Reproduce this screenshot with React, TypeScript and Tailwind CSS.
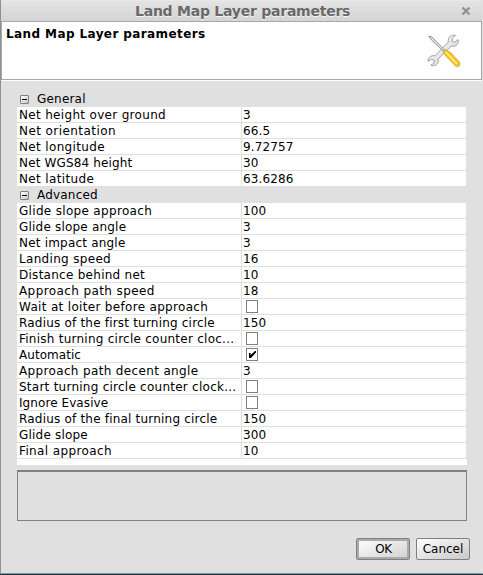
type Row = { label: string; value: string | boolean; tracking: string };

const general: Row[] = [
  { label: 'Net height over ground', value: '3', tracking: 'tracking-[0.32px]' },
  { label: 'Net orientation', value: '66.5', tracking: 'tracking-[0.43px]' },
  { label: 'Net longitude', value: '9.72757', tracking: 'tracking-[0.35px]' },
  { label: 'Net WGS84 height', value: '30', tracking: 'tracking-[0.15px]' },
  { label: 'Net latitude', value: '63.6286', tracking: 'tracking-[0.35px]' },
];

const advanced: Row[] = [
  { label: 'Glide slope approach', value: '100', tracking: 'tracking-[0.32px]' },
  { label: 'Glide slope angle', value: '3', tracking: 'tracking-[0.2px]' },
  { label: 'Net impact angle', value: '3', tracking: 'tracking-[0.2px]' },
  { label: 'Landing speed', value: '16', tracking: 'tracking-[0.32px]' },
  { label: 'Distance behind net', value: '10', tracking: 'tracking-[0.27px]' },
  { label: 'Approach path speed', value: '18', tracking: 'tracking-[0.4px]' },
  { label: 'Wait at loiter before approach', value: false, tracking: 'tracking-[0.32px]' },
  { label: 'Radius of the first turning circle', value: '150', tracking: 'tracking-[0.2px]' },
  { label: 'Finish turning circle counter cloc...', value: false, tracking: 'tracking-[0.25px]' },
  { label: 'Automatic', value: true, tracking: 'tracking-[0.05px]' },
  { label: 'Approach path decent angle', value: '3', tracking: 'tracking-[0.35px]' },
  { label: 'Start turning circle counter clock...', value: false, tracking: 'tracking-[0.25px]' },
  { label: 'Ignore Evasive', value: false, tracking: 'tracking-[0.08px]' },
  { label: 'Radius of the final turning circle', value: '150', tracking: 'tracking-[0.2px]' },
  { label: 'Glide slope', value: '300', tracking: 'tracking-[0.2px]' },
  { label: 'Final approach', value: '10', tracking: 'tracking-[0.38px]' },
];

function Check({ on }: { on: boolean }) {
  return (
    <span className="ml-[3px] block h-[13px] w-3 border border-[#808080] bg-white">
      {on && (
        <svg viewBox="0 0 10 11" className="block h-[11px] w-[10px]">
          <path d="M2 4h1.600v2L8 2h1V3.500L4 9H2z" fill="#000" />
        </svg>
      )}
    </span>
  );
}

function Group({ title }: { title: string }) {
  return (
    <div className="flex h-4 items-center pl-[3px]">
      <span className="flex h-[9px] w-[9px] items-center justify-center rounded-[1px] border border-[#808080] bg-gradient-to-br from-white to-[#c8c4b8]">
        <span className="block h-px w-[5px] bg-black" />
      </span>
      <span className="ml-2 leading-4 tracking-[0.2px]">{title}</span>
    </div>
  );
}

function Rows({ rows }: { rows: Row[] }) {
  return (
    <>
      {rows.map((r) => (
        <div key={r.label} className="flex h-4 w-[449px] border-b border-[#e0e0e0] bg-white">
          <div className={`h-[15px] w-[225px] border-r border-[#e0e0e0] pl-[2px] leading-4 ${r.tracking}`}>{r.label}</div>
          <div className="h-[15px] pl-[1px] leading-4 tracking-[0.12px]">
            {typeof r.value === 'boolean' ? (
              <div className="pt-px"><Check on={r.value} /></div>
            ) : (
              r.value
            )}
          </div>
        </div>
      ))}
    </>
  );
}

function Tools() {
  return (
    <svg viewBox="0 0 36 36" className="mt-[11px] h-9 w-9">
      <defs>
        <linearGradient id="steel" x1="0" y1="0" x2="1" y2="1">
          <stop offset="0" stopColor="#fff" />
          <stop offset="1" stopColor="#d0d0d0" />
        </linearGradient>
      </defs>
      <path
        d="M29.500 2.400C25.500 1.200 21.500 4.200 22.300 9L9 22.800C5 21.800 1.400 25 2.100 28.500L5.300 26.200L8.300 27.400L7.700 30.300L4.800 32.200C9 34.200 13.300 30.500 12 26L25.600 13C29.800 14.300 33.500 10.500 32 6.500L28.700 9.200L25.800 8.300L26.500 5.200Z"
        fill="url(#steel)" stroke="#999" strokeWidth="0.9" strokeLinejoin="round"
      />
      <path d="M2.800 3.500L5 3.300L7.500 5.500L18.500 17L17.200 18.200L5.500 7Z" fill="#e0e0e0" stroke="#8c8c8c" strokeWidth="0.9" />
      <path d="M17 19L19.600 16.500L24.200 19.300L33 28.500C35.500 31.800 32.800 34.800 29.500 33L20.500 23.800Z" fill="#f9c41c" stroke="#c89a30" strokeWidth="0.7" />
      <path d="M20.300 19.500L30.600 30.500" stroke="#fff09a" strokeWidth="1.500" strokeLinecap="round" />
    </svg>
  );
}

export default function App() {
  return (
    <div className="flex h-[575px] w-[483px] flex-col border-b border-[#123642] bg-[#e0e0e0] font-['DejaVu_Sans',sans-serif] text-[12px] text-black">
      <div className="flex h-[574px] flex-col border-b border-l border-r border-b-[#909090] border-l-[#909090] border-r-[#e0e0e0]">
        <div className="flex h-[21px] items-center justify-between border-t border-[#e8e8e8] bg-gradient-to-b from-[#e4e4e4] to-[#d4d4d4] pl-[134px] pr-[11px]">
          <span className="whitespace-nowrap text-[14px] font-bold leading-5 tracking-[-0.24px] text-[#696969] [text-shadow:0_1px_0_#f4f4f4]">Land Map Layer parameters</span>
          <svg viewBox="0 0 10 10" className="h-[10px] w-[10px]">
            <path d="M1.500 1.500L8.500 8.500M8.500 1.500L1.500 8.500" stroke="#929292" strokeWidth="2.400" />
          </svg>
        </div>
        <div className="flex h-[59px] w-[481px] justify-between border border-[#a8a8a8] bg-white pl-1 pr-[19px]">
          <span className="mt-[4px] whitespace-nowrap text-[12px] font-bold leading-4 tracking-[0.4px]">Land Map Layer parameters</span>
          <Tools />
        </div>
        <div className="h-px bg-white" />
        <div className="ml-4 mt-[10px] w-[450px] whitespace-nowrap">
          <Group title="General" />
          <Rows rows={general} />
          <Group title="Advanced" />
          <Rows rows={advanced} />
          <div className="h-[6px] bg-white" />
          <div className="mt-[5px] h-[51px] border border-t-2 border-[#808080]" />
        </div>
        <div className="mt-[17px] flex gap-[6px] pl-[355px]">
          <button className="h-[22px] w-[54px] rounded-[2px] border border-[#808080] bg-gradient-to-br from-white to-[#d0d0d0] pl-px leading-[18px] tracking-[-0.3px] [box-shadow:inset_0_0_0_2px_#aaa]">OK</button>
          <button className="h-[22px] w-[54px] rounded-[2px] border border-[#808080] bg-gradient-to-br from-white to-[#c8c8c8] leading-[18px]">Cancel</button>
        </div>
      </div>
    </div>
  );
}
